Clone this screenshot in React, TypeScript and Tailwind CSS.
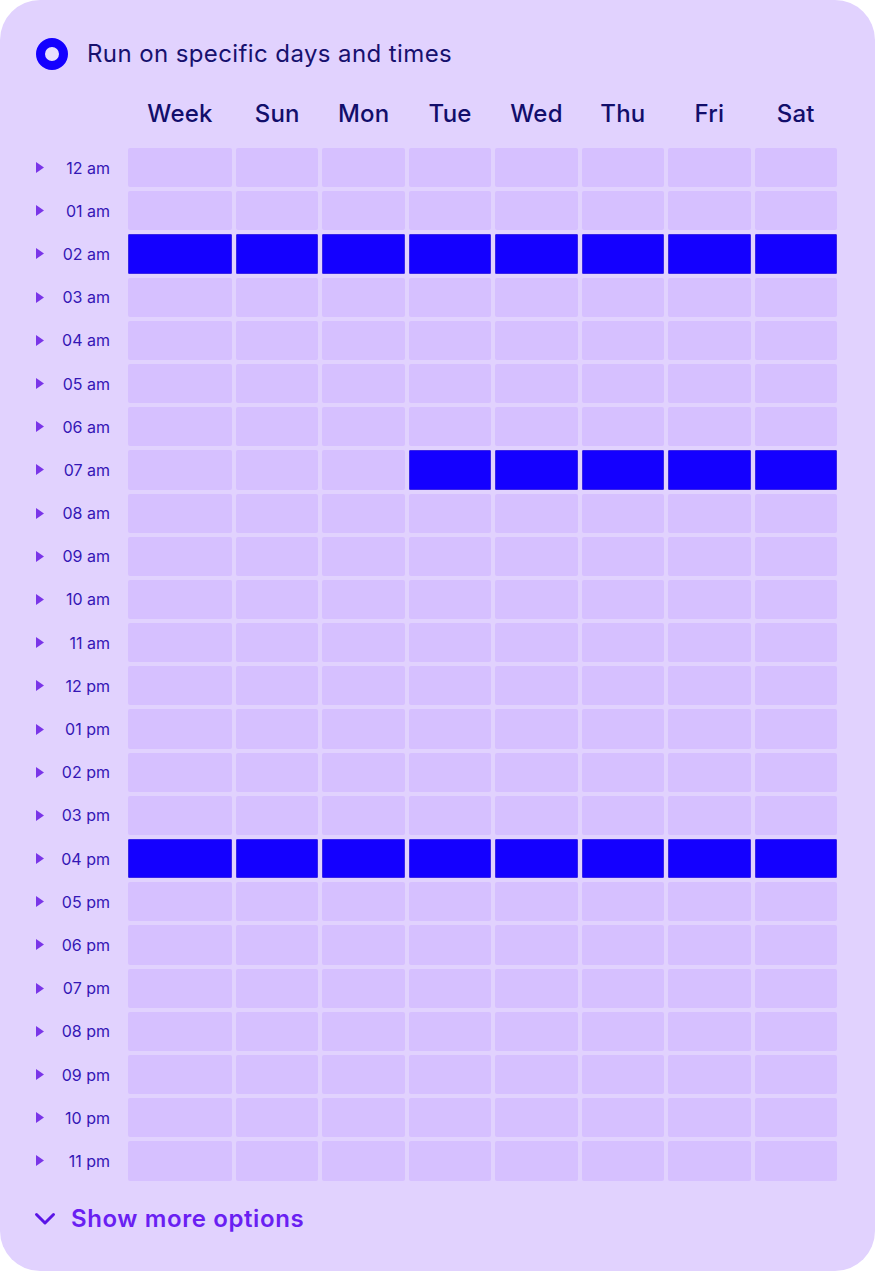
import React from "react";

const days = ["Week", "Sun", "Mon", "Tue", "Wed", "Thu", "Fri", "Sat"];
const hours = [
  "12 am", "01 am", "02 am", "03 am", "04 am", "05 am", "06 am", "07 am",
  "08 am", "09 am", "10 am", "11 am", "12 pm", "01 pm", "02 pm", "03 pm",
  "04 pm", "05 pm", "06 pm", "07 pm", "08 pm", "09 pm", "10 pm", "11 pm",
];

function isOn(r: number, c: number) {
  if (r === 2 || r === 16) return true;
  if (r === 7 && c >= 3) return true;
  return false;
}

export default function App() {
  return (
    <div className="w-[875px] h-[1271px] bg-white" style={{ fontFamily: "Inter, 'Noto Sans', sans-serif" }}>
      <div className="w-full h-full rounded-[40px] bg-[#e1d2fe] pl-[36px] pr-[38px] pt-[38px]">
        <div className="flex items-center h-[32px] gap-[19px]">
          <div className="w-[32px] h-[32px] rounded-full border-[9px] border-[#1400ff] bg-[#e8defe]" />
          <span className="text-[24px] leading-none text-[#17116e] tracking-[0.4px]">Run on specific days and times</span>
        </div>

        <div className="grid grid-cols-[88px_104px_repeat(7,1fr)] gap-x-[4px] mt-[24px] h-[40px] items-center">
          <div />
          {days.map((d) => (
            <div key={d} className="text-center text-[24px] font-medium leading-none text-[#120e6b] tracking-[0.2px]">
              {d}
            </div>
          ))}
        </div>

        <div className="grid grid-cols-[88px_104px_repeat(7,1fr)] gap-x-[4px] gap-y-[4px] mt-[14px] auto-rows-[39.2px]">
          {hours.map((h, r) => (
            <React.Fragment key={h}>
              <div className="flex items-center justify-between pr-[14px]">
                <svg width="8" height="11" viewBox="0 0 8 11">
                  <path d="M0 0 L8 5.5 L0 11 Z" fill="#7a35e8" />
                </svg>
                <span className="text-[16px] leading-none text-[#3417b5]">{h}</span>
              </div>
              {days.map((d, c) => (
                <div
                  key={d}
                  className={
                    isOn(r, c)
                      ? "rounded-[1px] bg-[#1400ff] border border-[#3a26e6]"
                      : "rounded-[2px] bg-[#d6c0ff]"
                  }
                />
              ))}
            </React.Fragment>
          ))}
        </div>

        <div className="flex items-center gap-[15px] mt-[26px] -ml-[2px]">
          <svg width="22" height="14" viewBox="0 0 22 14" fill="none">
            <path d="M2.5 2.5 L11 11 L19.5 2.5" stroke="#5a14e6" strokeWidth="3" strokeLinecap="round" strokeLinejoin="round" />
          </svg>
          <span className="text-[24px] font-semibold leading-none text-[#6a1ff2] tracking-[0.6px]">Show more options</span>
        </div>
      </div>
    </div>
  );
}
